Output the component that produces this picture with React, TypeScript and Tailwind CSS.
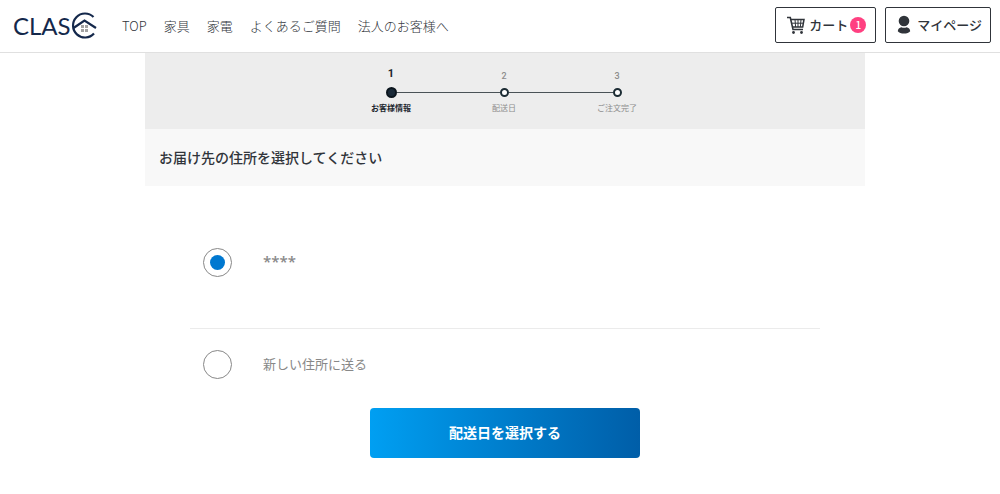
import React from "react";

const navItems = ["TOP", "家具", "家電", "よくあるご質問", "法人のお客様へ"];
const steps = ["お客様情報", "配送日", "ご注文完了"];

function Logo() {
  return (
    <a href="#" aria-label="CLAS" className="flex w-[85px] shrink-0 items-center text-[#14284b]">
      <span className="w-[60px] pl-px font-['Lato','Liberation_Sans',sans-serif] text-2xl leading-[28px]">CLAS</span>
      <svg viewBox="0 0 27 28" className="h-7 w-[27px] shrink-0" fill="none" aria-hidden="true">
        <path d="M22.500 5A12 12 0 1 0 23 21.500" stroke="currentColor" strokeWidth="2.200" />
        <path d="M2.500 16 13.500 8.500 25 16" stroke="currentColor" strokeWidth="2.200" />
        <path d="M10 13h3v3h-3zM14 13h3v3h-3zM10 17h3v3h-3zM14 17h3v3h-3z" fill="#a3a3a3" />
      </svg>
    </a>
  );
}

function CartIcon() {
  return (
    <svg viewBox="0 0 20 20" className="h-5 w-5" fill="none" stroke="#30343a" aria-hidden="true">
      <path d="M1 2.500h3.300l2.700 12h10" strokeWidth="1.600" />
      <path d="M4.800 4.500h13.200l-1.300 7.500H6.500" strokeWidth="1.500" />
      <path d="M5.500 8.200h12M9 4.500l.6 7.500M12 4.500v7.500M15 4.500l-.6 7.500" strokeWidth="1" />
      <circle cx="7.500" cy="17.500" r="1.400" fill="#30343a" stroke="none" />
      <circle cx="15.500" cy="17.500" r="1.400" fill="#30343a" stroke="none" />
    </svg>
  );
}

function UserIcon() {
  return (
    <svg viewBox="0 0 14 20" className="h-5 w-3.5" fill="#30343a" aria-hidden="true">
      <circle cx="7" cy="6" r="5.300" />
      <path d="M.8 16.200C.8 14 2.500 12.600 4.400 12.200c1.700.8 3.500.8 5.200 0 1.900.4 3.600 1.800 3.600 4C12 17.800 9.700 18.500 7 18.500s-5-.7-6.200-2.300z" />
    </svg>
  );
}

function Header() {
  return (
    <header className="flex items-center border-b border-[#e0e0e0] bg-white pr-[9px] pl-3">
      <Logo />
      <nav className="ml-[25px] flex flex-1 gap-[17px] text-[13px] font-light whitespace-nowrap">
        {navItems.map((item) => (
          <a key={item} href="#">{item}</a>
        ))}
      </nav>
      <div className="flex gap-[9px] pt-[7px] pb-[9px] text-[13px] leading-5 font-medium whitespace-nowrap">
        <a href="#" className="flex h-9 items-center rounded-xs border border-[#30343a] pr-[9px] pl-2.5">
          <CartIcon />
          <span className="ml-[3px]">カート</span>
          <span className="ml-0.5 flex size-4 items-center justify-center rounded-full bg-[#ff4081] text-[10px] text-white">1</span>
        </a>
        <a href="#" className="flex h-9 items-center rounded-xs border border-[#30343a] pr-2 pl-[11px]">
          <UserIcon />
          <span className="ml-1.5">マイページ</span>
        </a>
      </div>
    </header>
  );
}

function Steps() {
  return (
    <ol className="flex justify-center bg-[#ededed] pt-[15px] pr-0.5 pb-[15px]">
      {steps.map((label, i) => {
        const current = i === 0;
        return (
          <li
            key={label}
            aria-current={current ? "step" : undefined}
            className={`flex w-[113px] flex-col items-center ${current ? "font-bold text-[#1c262e]" : "text-[#8c8c8c]"}`}
          >
            <span className={`font-['Roboto',sans-serif] leading-3 ${current ? "pb-1 text-[11px]" : "pt-0.5 pb-0.5 text-[9px] font-medium"}`}>
              {i + 1}
            </span>
            <span className="flex h-[17px] w-full items-center">
              <span className={`h-px flex-1 ${i > 0 ? "bg-[#4a5257]" : ""}`} />
              {current ? (
                <span className="size-[11px] rounded-full border-2 border-[#0b151d] bg-[#1a2a38]" />
              ) : (
                <span className="size-[9px] rounded-full border-2 border-[#1c2c34] bg-white" />
              )}
              <span className={`h-px flex-1 ${i < steps.length - 1 ? "bg-[#4a5257]" : ""}`} />
            </span>
            <span className="pt-px text-[8px] leading-3">{label}</span>
          </li>
        );
      })}
    </ol>
  );
}

function AddressOption({ label, masked, defaultChecked }: { label: string; masked?: boolean; defaultChecked?: boolean }) {
  return (
    <label className="flex items-center gap-[31px] px-[13px] text-[13px] text-[#888]">
      <input
        type="radio"
        name="address"
        defaultChecked={defaultChecked}
        className="grid size-[29px] shrink-0 appearance-none place-content-center rounded-full border border-[#888] bg-white before:size-[15px] before:rounded-full checked:before:bg-[#0078d0]"
      />
      <span className={masked ? "pb-1 font-['Open_Sans',sans-serif] text-[15px] leading-5 font-semibold" : "pb-0.5 leading-5"}>{label}</span>
    </label>
  );
}

export default function App() {
  return (
    <div className="bg-white font-['Noto_Sans_CJK_JP',sans-serif] text-[#30343a]">
      <Header />
      <div className="pl-2.5">
        <main className="mx-auto max-w-[720px]">
          <Steps />
          <h1 className="bg-[#f8f8f8] px-3.5 py-[17px] text-sm leading-[23px] font-medium">
            お届け先の住所を選択してください
          </h1>
          <form className="px-[45px] pt-[62px] pb-9" onSubmit={(e) => e.preventDefault()}>
            <div className="border-b border-[#ebebeb] pb-[51px]">
              <AddressOption label="****" masked defaultChecked />
            </div>
            <div className="pt-[21px] pb-[29px]">
              <AddressOption label="新しい住所に送る" />
            </div>
            <button
              type="submit"
              className="mx-auto block h-[50px] w-full max-w-[270px] rounded bg-linear-to-r from-[#009ff2] to-[#005ea8] pb-0.5 text-sm font-bold text-white"
            >
              配送日を選択する
            </button>
          </form>
        </main>
      </div>
    </div>
  );
}
